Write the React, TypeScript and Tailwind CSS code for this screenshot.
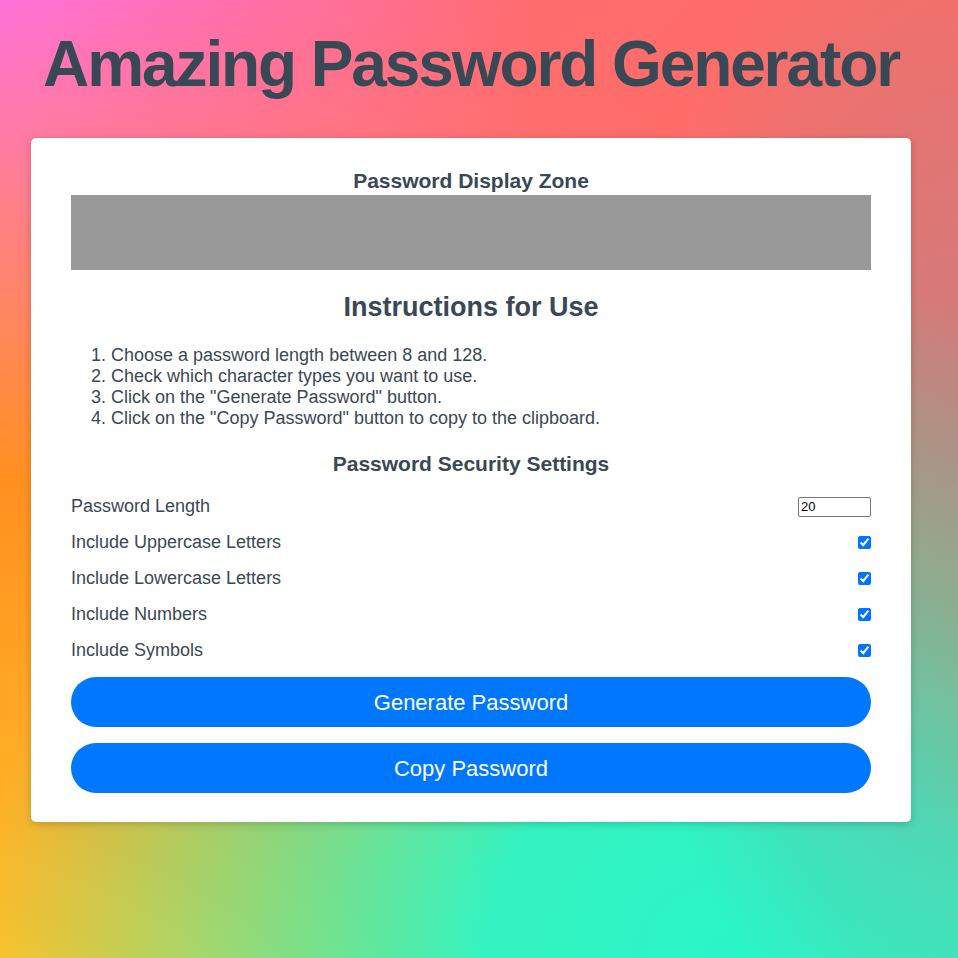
import React from "react";

const rows = [
  "Include Uppercase Letters",
  "Include Lowercase Letters",
  "Include Numbers",
  "Include Symbols",
];

export default function App() {
  return (
    <div className="min-h-[958px] w-full overflow-hidden bg-[radial-gradient(ellipse_35%_65%_at_100%_50%,rgba(150,140,150,0.5)_0%,rgba(150,140,150,0.3)_50%,rgba(150,140,150,0)_100%),radial-gradient(ellipse_85%_78%_at_76%_100%,rgba(42,245,200,1)_0%,rgba(42,245,200,0.95)_30%,rgba(42,245,200,0.42)_65%,rgba(42,245,200,0)_92%),radial-gradient(ellipse_100%_85%_at_100%_0%,rgba(255,108,100,1)_0%,rgba(255,108,100,0.9)_45%,rgba(255,108,100,0.6)_62%,rgba(255,108,100,0)_100%),linear-gradient(to_bottom,#ff72d8_0%,#ff9020_50%,#ffc028_100%)] font-['Liberation_Sans',Arial,sans-serif] text-[#394855]">
      <div className="w-[942px] pb-[136px]">
        <h1 className="pt-[27px] text-center text-[64px] font-bold leading-[74px] tracking-[-2.1px]">
          Amazing Password Generator
        </h1>
        <div className="mx-auto mt-[37px] w-[880px] rounded-[5px] bg-white px-10 pb-[29px] pt-[31px] shadow-[0_2px_8px_rgba(0,0,0,0.18)]">
          <h2 className="text-center text-[21px] font-bold leading-[23px]">
            Password Display Zone
          </h2>
          <div className="mt-[3px] h-[75px] w-full bg-[#999999]" />
          <h2 className="mt-[22px] text-center text-[27px] font-bold leading-[30px]">
            Instructions for Use
          </h2>
          <ol className="mt-[23px] list-decimal pl-10 text-[18px] leading-[21px]">
            <li>Choose a password length between 8 and 128.</li>
            <li>Check which character types you want to use.</li>
            <li>Click on the "Generate Password" button.</li>
            <li>Click on the "Copy Password" button to copy to the clipboard.</li>
          </ol>
          <h3 className="mt-[23px] text-center text-[21px] font-bold leading-[23px]">
            Password Security Settings
          </h3>
          <div className="mt-[21px] flex flex-col gap-[15px] text-[18px] leading-[21px]">
            <div className="flex h-[21px] items-center justify-between">
              <label>Password Length</label>
              <input
                type="number"
                defaultValue={20}
                className="h-[20px] w-[73px] rounded-[2px] border border-[#767676] bg-white px-[2px] font-['Liberation_Sans',Arial,sans-serif] text-[13px] leading-[16px] text-black"
              />
            </div>
            {rows.map((r) => (
              <div key={r} className="flex h-[21px] items-center justify-between">
                <label>{r}</label>
                <input type="checkbox" defaultChecked className="h-[13px] w-[13px] accent-[#0075ff]" />
              </div>
            ))}
          </div>
          <div className="mt-[16px] flex flex-col gap-[16px]">
            <button className="h-[50px] w-full rounded-full bg-[#0077ff] text-[22px] text-white">
              Generate Password
            </button>
            <button className="h-[50px] w-full rounded-full bg-[#0077ff] text-[22px] text-white">
              Copy Password
            </button>
          </div>
        </div>
      </div>
    </div>
  );
}
